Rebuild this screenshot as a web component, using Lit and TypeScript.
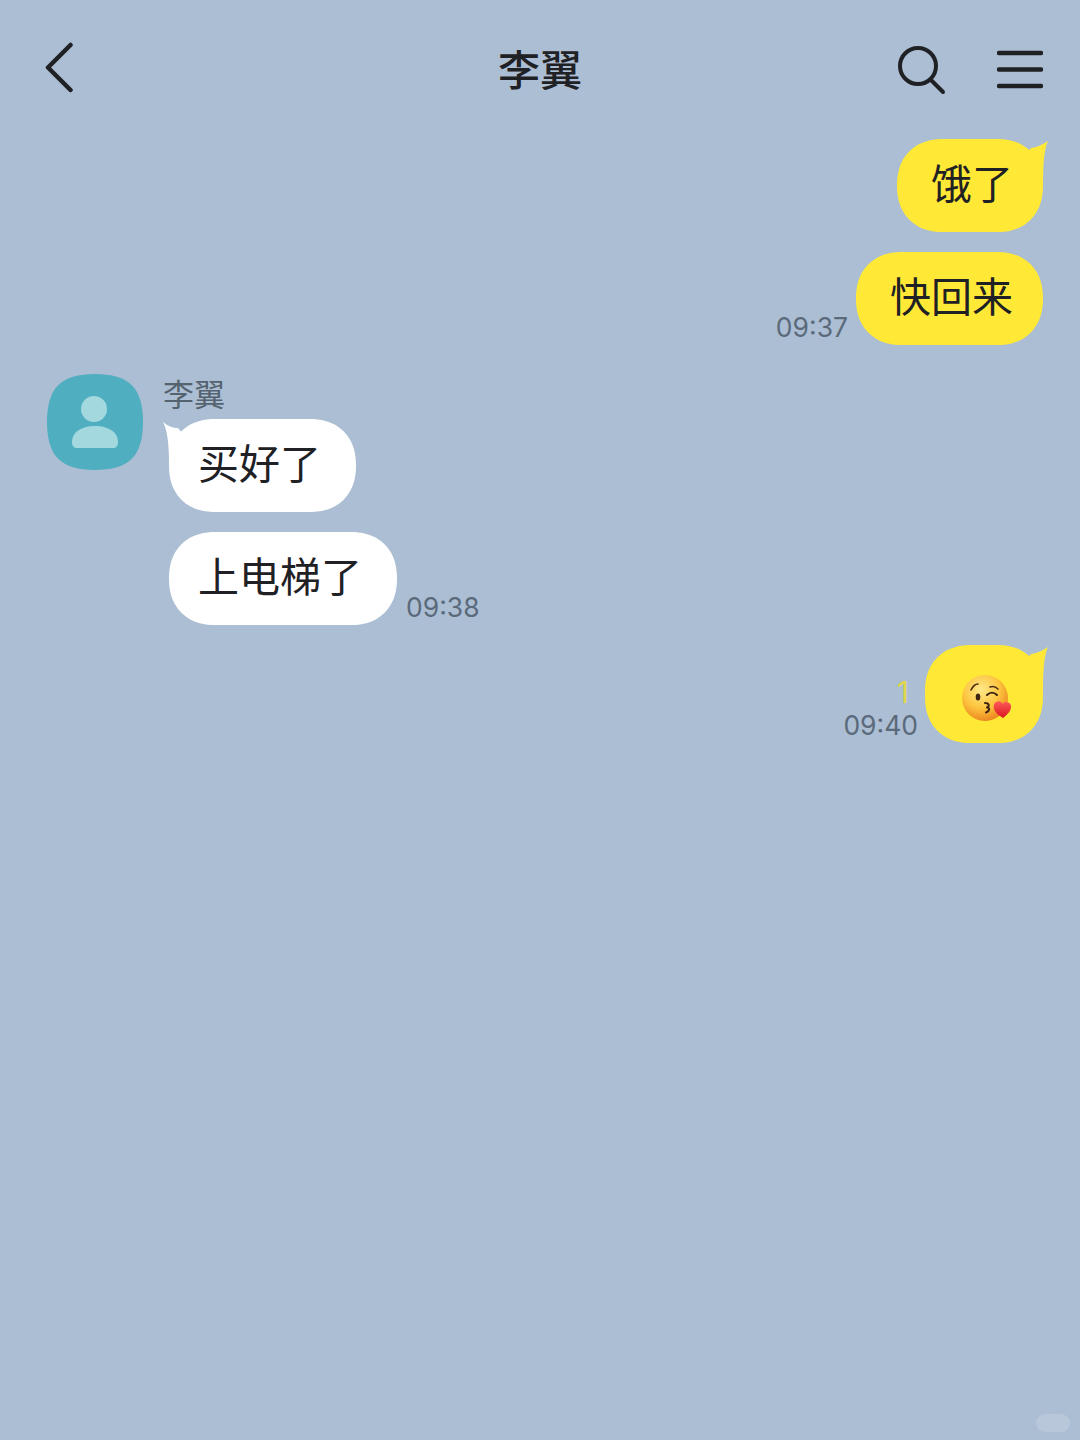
import { LitElement, css, html, svg } from "lit";
import { customElement } from "lit/decorators.js";

const kissEmoji = svg`
  <defs>
    <radialGradient id="face" cx="42%" cy="32%" r="72%">
      <stop offset="0" stop-color="#ffe88a" />
      <stop offset="0.55" stop-color="#fdc53f" />
      <stop offset="1" stop-color="#ea7f1c" />
    </radialGradient>
    <linearGradient id="heart" x1="0" y1="0" x2="0" y2="1">
      <stop offset="0" stop-color="#ff5a5a" />
      <stop offset="1" stop-color="#d9161f" />
    </linearGradient>
  </defs>
  <circle cx="24" cy="24" r="23" fill="url(#face)" />
  <path d="M10 16C12 12 14 10 17 10" fill="none" stroke="#4a2a10" stroke-width="1.600" stroke-linecap="round" />
  <ellipse cx="17" cy="23" rx="2.300" ry="3.600" fill="#3c2410" />
  <path d="M29 13C32 12 35 13 37 15" fill="none" stroke="#4a2a10" stroke-width="1.600" stroke-linecap="round" />
  <path d="M26 21C29 18 33 18 36 21" fill="none" stroke="#3c2410" stroke-width="2" stroke-linecap="round" />
  <path d="M24 29C28 29 29 32 26 33.500C29 34 29 37 25 38.500" fill="none" stroke="#3c2410" stroke-width="2" stroke-linecap="round" stroke-linejoin="round" />
  <path d="M42 44C35 40 32 36 33 31C34 26.500 40 26 41.500 30C43.500 26.500 49.500 27.500 50 32C50.500 37 46 41 42 44Z" fill="url(#heart)" />
`;

@customElement("app-root")
export class AppRoot extends LitElement {
  static styles = css`
    :host {
      display: block;
      position: relative;
      width: 1080px;
      height: 1440px;
      overflow: hidden;
      background: #abbed3;
      color: #1f2124;
      font-family: "Noto Sans CJK SC", "Noto Sans", sans-serif;
    }

    .bar {
      display: grid;
      grid-template-columns: 1fr auto 1fr;
      align-items: center;
      height: 138px;
      padding: 0 37px;
      box-sizing: border-box;
    }

    .back {
      margin-left: 7px;
    }

    .title {
      font-size: 42px;
      font-weight: 500;
      line-height: 1;
      padding-bottom: 3px;
    }

    .tools {
      display: flex;
      justify-content: flex-end;
      align-items: center;
      gap: 48px;
    }

    svg {
      display: block;
    }

    .list {
      display: flex;
      flex-direction: column;
      gap: 20px;
      padding: 1px 37px 0 47px;
    }

    .row {
      display: flex;
      align-items: flex-end;
      gap: 9px;
    }

    .row.out {
      justify-content: flex-end;
      gap: 8px;
    }

    .row.out.last {
      gap: 7px;
    }

    .bubble {
      position: relative;
      display: flex;
      align-items: center;
      height: 93px;
      padding: 0 30px 8px 34px;
      box-sizing: border-box;
      border-radius: 46px;
      corner-shape: superellipse(1.150);
      font-size: 41px;
      line-height: 1;
      background: #ffe936;
    }

    .in .bubble {
      padding: 0 35px 8px 29px;
      background: #fff;
    }

    .tail {
      position: absolute;
      top: 0;
    }

    .out .tail {
      right: -5px;
    }

    .in .tail {
      left: -6px;
    }

    .meta {
      display: flex;
      flex-direction: column;
      align-items: flex-end;
      font-family: Inter, "Noto Sans", sans-serif;
      font-size: 26.500px;
      line-height: 32px;
      color: #5b6a7b;
      padding-bottom: 2px;
    }

    .unread {
      color: #e0d64c;
      font-size: 30px;
      line-height: 34px;
      padding-right: 9px;
    }

    .peer {
      display: grid;
      grid-template-columns: 96px 1fr;
      column-gap: 20px;
      margin-top: 9px;
    }

    .name {
      height: 25px;
      font-size: 31px;
      line-height: 38px;
      color: #55626f;
    }

    .stack {
      display: flex;
      flex-direction: column;
      gap: 20px;
      padding: 20px 0 0 6px;
    }

    .bubble.emoji {
      height: 98px;
      width: 118px;
      padding: 10px 0 0 36px;
    }

    .mark {
      position: absolute;
      right: 10px;
      bottom: 8px;
      width: 34px;
      height: 18px;
      border-radius: 9px;
      background: #b8c8da;
    }
  `;

  private outTail() {
    return html`<svg class="tail" width="24" height="44" viewBox="0 0 24 44">
      <path d="M0 18L7 9Q15 8 24 2Q19 12 19 44L0 44Z" fill="#ffe936" />
    </svg>`;
  }

  private inTail() {
    return html`<svg class="tail" width="24" height="44" viewBox="0 0 24 44">
      <path d="M0 3Q7 9 15 9L24 20L24 44L6 44Q6 14 0 3Z" fill="#fff" />
    </svg>`;
  }

  render() {
    return html`
      <div class="bar">
        <svg class="back" width="34" height="54" viewBox="0 0 34 54">
          <path d="M26.500 3L4 25.500L26.500 48" fill="none" stroke="#1f2124" stroke-width="4.500" stroke-linecap="round" stroke-linejoin="round" />
        </svg>
        <div class="title">李翼</div>
        <div class="tools">
          <svg width="52" height="52" viewBox="0 0 52 52">
            <circle cx="21" cy="23" r="18" fill="none" stroke="#1f2124" stroke-width="4" />
            <path d="M35 38L46 49" stroke="#1f2124" stroke-width="4" stroke-linecap="round" />
          </svg>
          <svg width="46" height="42" viewBox="0 0 46 42">
            <path d="M2 5H44M2 21.500H44M2 38H44" stroke="#1f2124" stroke-width="4.500" stroke-linecap="round" />
          </svg>
        </div>
      </div>

      <div class="list">
        <div class="row out"><div class="bubble">饿了${this.outTail()}</div></div>
        <div class="row out">
          <div class="meta">09:37</div>
          <div class="bubble">快回来</div>
        </div>

        <div class="peer">
          <svg width="96" height="96" viewBox="0 0 96 96">
            <path d="M48 0C82 0 96 14 96 48C96 82 82 96 48 96C14 96 0 82 0 48C0 14 14 0 48 0Z" fill="#4faebf" />
            <circle cx="47" cy="35" r="13" fill="#a3d8de" />
            <path d="M25 68C25 58 35 52 48 52C61 52 71 58 71 68C71 72 69 74 66 74H30C27 74 25 72 25 68Z" fill="#a3d8de" />
          </svg>
          <div>
            <div class="name">李翼</div>
            <div class="stack in">
              <div class="row"><div class="bubble">买好了${this.inTail()}</div></div>
              <div class="row">
                <div class="bubble">上电梯了</div>
                <div class="meta">09:38</div>
              </div>
            </div>
          </div>
        </div>

        <div class="row out last">
          <div class="meta">
            <span class="unread">1</span>
            <span>09:40</span>
          </div>
          <div class="bubble emoji">
            <svg width="50" height="50" viewBox="0 0 50 50">${kissEmoji}</svg>
            ${this.outTail()}
          </div>
        </div>
      </div>

      <div class="mark"></div>
    `;
  }
}
